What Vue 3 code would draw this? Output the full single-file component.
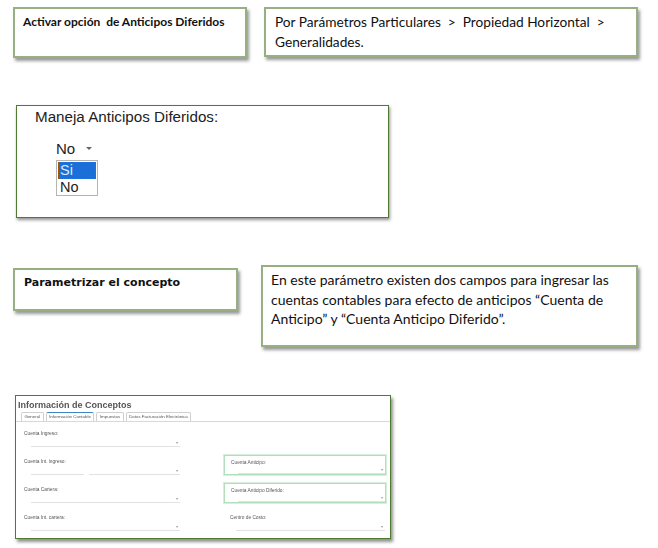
<template>
  <div class="page">
    <div class="row row-one">
      <div class="note note-title note-activar"><b>Activar opción&nbsp; de Anticipos Diferidos</b></div>
      <div class="note note-ruta">Por Parámetros Particulares &nbsp;&gt;&nbsp; Propiedad Horizontal &nbsp;&gt; Generalidades.</div>
    </div>

    <div class="shot shot-select">
      <div class="select-label">Maneja Anticipos Diferidos:</div>
      <div class="select-current">No <span class="caret"></span></div>
      <div class="select-list">
        <div class="option selected">Si</div>
        <div class="option">No</div>
      </div>
    </div>

    <div class="row row-two">
      <div class="note note-title note-concepto"><b>Parametrizar el concepto</b></div>
      <div class="note note-campos">En este parámetro existen dos campos para ingresar las cuentas contables para efecto de anticipos “Cuenta de Anticipo” y “Cuenta Anticipo Diferido”.</div>
    </div>

    <div class="shot shot-form">
      <div class="form-title">Información de Conceptos</div>
      <div class="tabs">
        <span v-for="tab in tabs" :key="tab" class="tab" :class="{ active: tab === activeTab }">{{ tab }}</span>
      </div>
      <div class="fields">
        <div
          v-for="field in fields"
          :key="field.label"
          class="field"
          :class="{ marked: field.marked, right: field.right }"
        >
          <template v-if="field.label">
            <div class="field-label">{{ field.label }}</div>
            <div class="field-line"><i v-if="field.split" class="gap"></i><span class="field-arrow">▾</span></div>
          </template>
        </div>
      </div>
    </div>
  </div>
</template>

<script setup>
const tabs = ['General', 'Información Contable', 'Impuestos', 'Datos Facturación Electrónica']
const activeTab = 'Información Contable'

const fields = [
  { label: 'Cuenta Ingreso:' },
  { label: '' },
  { label: 'Cuenta Int. ingreso:', split: true },
  { label: 'Cuenta Anticipo:', marked: true },
  { label: 'Cuenta Cartera:' },
  { label: 'Cuenta Anticipo Diferido:', marked: true },
  { label: 'Cuenta Int. cartera:' },
  { label: 'Centro de Costo:', right: true }
]
</script>

<style>
html, body {
  margin: 0;
  background: #fff;
}
</style>

<style scoped>
.page {
  width: 658px;
  height: 548px;
  overflow: hidden;
  box-sizing: border-box;
  padding-top: 7px;
  font-family: Lato, "Liberation Sans", sans-serif;
  color: #111;
}

.row {
  display: flex;
  align-items: flex-start;
}

.note {
  box-sizing: border-box;
  background: #fff;
  border: 2px solid #98b081;
  box-shadow: 2px 3px 3px rgba(70, 70, 70, 0.55);
}

.note-title {
  font-size: 12px;
  line-height: 14px;
}

.note-activar {
  margin-left: 13px;
  width: 234px;
  height: 51px;
  padding: 6px 8px;
}

.note-ruta {
  margin-left: 17px;
  width: 374px;
  height: 50px;
  padding: 3px 9px;
  font-size: 13.7px;
  line-height: 20px;
}

.shot {
  box-sizing: border-box;
  background: #fff;
  border: 1px solid #4f7a32;
  box-shadow: 1px 2px 3px rgba(70, 70, 70, 0.6);
}

.shot-select {
  margin: 47px 0 0 16px;
  width: 373px;
  height: 113px;
  padding: 0 0 0 18px;
  font-family: "Liberation Sans", Arial, sans-serif;
}

.select-label {
  font-size: 15.2px;
  line-height: 20px;
  color: #222;
  margin-top: 1px;
}

.select-current {
  font-size: 15px;
  line-height: 18px;
  margin: 13px 0 0 21px;
  color: #222;
  display: flex;
  align-items: center;
}

.caret {
  width: 0;
  height: 0;
  margin: 0 0 1px 11px;
  border-left: 3px solid transparent;
  border-right: 3px solid transparent;
  border-top: 3px solid #666;
}

.select-list {
  width: 42px;
  margin: 2px 0 0 21px;
  padding: 1px 1px 0;
  border: 1px solid #b4b4b4;
  box-sizing: border-box;
}

.option {
  font-size: 14.5px;
  line-height: 16px;
  height: 16px;
  padding-left: 2px;
  color: #222;
}

.option.selected {
  height: 17px;
  background: #1a6fd8;
  color: #dfeaf8;
  outline: 1px dotted #a15a10;
  outline-offset: -1px;
}

.row-two {
  margin-top: 47px;
}

.note-concepto {
  margin: 3px 0 0 13px;
  width: 225px;
  height: 43px;
  padding: 6px 9px;
  font-family: "DejaVu Sans", sans-serif;
  font-size: 11px;
}

.note-campos {
  margin-left: 23px;
  width: 377px;
  height: 82px;
  padding: 3px 8px;
  font-size: 14px;
  line-height: 19.5px;
}

.shot-form {
  margin: 48px 0 0 15px;
  width: 376px;
  height: 144px;
  padding-top: 3px;
  font-family: "Liberation Sans", Arial, sans-serif;
  box-shadow: 2px 3px 3px rgba(70, 70, 70, 0.6);
}

.form-title {
  font-size: 9px;
  line-height: 13px;
  font-weight: 700;
  color: #555;
  padding-left: 2px;
  filter: blur(0.3px);
}

.tabs {
  display: flex;
  gap: 2px;
  height: 9px;
  padding-left: 5px;
  border-bottom: 1px solid #d8d8d8;
}

.tab {
  font-size: 4.4px;
  line-height: 8px;
  padding: 0 2.5px;
  color: #555;
  border: 1px solid #d0d0d0;
  border-bottom: none;
  border-radius: 2px 2px 0 0;
  filter: blur(0.3px);
}

.tab.active {
  border-top: 1px solid #3c86c6;
  background: #fff;
}

.fields {
  display: grid;
  grid-template-columns: 162px 162px;
  column-gap: 38px;
  grid-auto-rows: 28px;
  padding: 8px 0 0 8px;
}

.field {
  box-sizing: border-box;
  height: 21px;
  position: relative;
}

.field-label {
  font-size: 4.8px;
  line-height: 8px;
  color: #555;
  filter: blur(0.3px);
}

.field-line {
  position: absolute;
  left: 7px;
  right: 6px;
  top: 13px;
  height: 3px;
  border-bottom: 1px solid #e2e2e2;
}

.field-line .gap {
  position: absolute;
  left: 53px;
  top: 0;
  bottom: -1px;
  width: 5px;
  background: #fff;
}

.field-arrow {
  position: absolute;
  right: 2px;
  top: -3px;
  font-size: 4px;
  line-height: 6px;
  color: #999;
}

.field.right {
  padding-left: 6px;
}

.field.right .field-line {
  left: 12px;
  right: 1px;
}

.field.marked {
  border: 1px solid #b2e0bd;
  outline: 1px solid #d5efdb;
  height: 20px;
  padding: 3px 0 0 6px;
  margin-top: -3px;
}

.field.marked .field-line {
  top: 14px;
  left: 13px;
  right: 0;
}
</style>
